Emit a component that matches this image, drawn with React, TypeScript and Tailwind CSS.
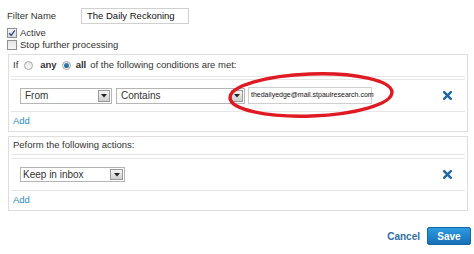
import React from "react";

const font = { fontFamily: '"Liberation Sans", Arial, sans-serif' };

function Arrow({ w = 12 }: { w?: number }) {
  return (
    <div
      className="flex items-center justify-center border border-[#9a9a9a] bg-gradient-to-b from-[#f4f4f4] to-[#cfcfcf] self-stretch my-[1px] mr-[1px]"
      style={{ width: w }}
    >
      <svg width="6" height="4" viewBox="0 0 6 4">
        <path d="M0 0 L6 0 L3 3.5 Z" fill="#222" />
      </svg>
    </div>
  );
}

function XIcon() {
  return (
    <svg width="9" height="9" viewBox="0 0 9 9">
      <path d="M1.2 1.2 L7.8 7.8 M7.8 1.2 L1.2 7.8" stroke="#1f68a3" strokeWidth="2.4" strokeLinecap="square" />
    </svg>
  );
}

function Radio({ checked }: { checked?: boolean }) {
  return (
    <div className="w-[9px] h-[9px] rounded-full border border-[#a8a8a8] bg-gradient-to-b from-[#e6e6e6] to-[#fafafa] flex items-center justify-center">
      {checked && <div className="w-[5px] h-[5px] rounded-full bg-gradient-to-b from-[#3a8ab8] to-[#1d5f8a]" />}
    </div>
  );
}

export default function App() {
  return (
    <div className="relative w-[474px] h-[254px] bg-white text-[#333] overflow-hidden" style={font}>
      <div className="pt-[8px]">
        <div className="flex items-center pl-[7px] h-[16px]">
          <div className="w-[74px] text-[9.5px] text-[#333]">Filter Name</div>
          <div className="w-[108px] h-[16px] border border-[#d0d0d0] flex items-center pl-[5px] text-[9.5px] text-[#111]">
            The Daily Reckoning
          </div>
        </div>
        <div className="mt-[3px] pl-[7px] flex items-center h-[12px]">
          <div className="w-[10px] h-[10px] border border-[#8f8f8f] bg-gradient-to-b from-[#f4f4f4] to-[#dcdcdc] flex items-center justify-center">
            <svg width="8" height="8" viewBox="0 0 8 8">
              <path d="M1.2 4.2 L3.2 6.3 L6.8 1.3" stroke="#2a4f8a" strokeWidth="1.4" fill="none" />
            </svg>
          </div>
          <span className="ml-[3px] text-[9.5px]">Active</span>
        </div>
        <div className="pl-[7px] flex items-center h-[12px]">
          <div className="w-[10px] h-[10px] border border-[#8f8f8f] bg-gradient-to-b from-[#e4e4e4] to-[#f6f6f6]" />
          <span className="ml-[3px] text-[9.5px]">Stop further processing</span>
        </div>
      </div>

      {/* Panel 1 */}
      <div className="ml-[8px] mt-[3px] w-[460px] border border-[#dedede]">
        <div className="h-[22px] mx-[2px] border-b border-[#e6e6e6] flex items-center pl-[2px] text-[9.5px]">
          <span>If</span>
          <span className="ml-[6px]"><Radio /></span>
          <span className="ml-[7px] font-bold">any</span>
          <span className="ml-[5px]"><Radio checked /></span>
          <span className="ml-[5px] font-bold">all</span>
          <span className="ml-[4px]">of the following conditions are met:</span>
        </div>
        <div className="mt-[2px] mx-[2px] h-[33px] border-t border-b border-[#e6e6e6] flex items-center pl-[9px] pr-[13px]">
          <div className="w-[92px] h-[16px] border border-[#b5b5b5] flex items-center">
            <span className="flex-1 pl-[4px] text-[10px]">From</span>
            <Arrow />
          </div>
          <div className="ml-[4px] w-[129px] h-[16px] border border-[#b5b5b5] flex items-center">
            <span className="flex-1 pl-[4px] text-[10px]">Contains</span>
            <Arrow />
          </div>
          <div className="ml-[3px] w-[124px] h-[17px] border border-[#cfcfcf] flex items-center pl-[2px] text-[7px] text-[#111]">
            thedailyedge@mail.stpaulresearch.com
          </div>
          <div className="flex-1" />
          <XIcon />
        </div>
        <div className="h-[19px] flex items-center pl-[4px] text-[9.5px] text-[#2b8ccd]">Add</div>
      </div>

      {/* Panel 2 */}
      <div className="ml-[8px] mt-[4px] w-[460px] border border-[#dedede]">
        <div className="h-[18px] mx-[2px] border-b border-[#e6e6e6] flex items-center pl-[2px] text-[9.5px]">
          Peform the following actions:
        </div>
        <div className="mt-[3px] mx-[2px] h-[33px] border-t border-b border-[#e6e6e6] flex items-center pl-[9px] pr-[13px]">
          <div className="w-[105px] h-[15px] border border-[#b5b5b5] flex items-center">
            <span className="flex-1 pl-[2px] text-[10px]">Keep in inbox</span>
            <Arrow w={13} />
          </div>
          <div className="flex-1" />
          <XIcon />
        </div>
        <div className="h-[19px] flex items-center pl-[4px] text-[9.5px] text-[#2b8ccd]">Add</div>
      </div>

      <div className="mt-[16px] pr-[3px] flex items-center justify-end">
        <span className="text-[10px] font-bold text-[#2c6ea8]">Cancel</span>
        <div className="ml-[7px] w-[44px] h-[18px] rounded-[2px] bg-gradient-to-b from-[#2e9be2] to-[#156fb6] border border-[#1466a8] flex items-center justify-center text-[10px] font-bold text-white">
          Save
        </div>
      </div>

      <svg className="absolute left-0 top-0 pointer-events-none" width="474" height="254">
        <ellipse cx="311" cy="95" rx="81" ry="21" fill="none" stroke="#e01a22" strokeWidth="3.5" transform="rotate(-2 311 95)" />
      </svg>
    </div>
  );
}
